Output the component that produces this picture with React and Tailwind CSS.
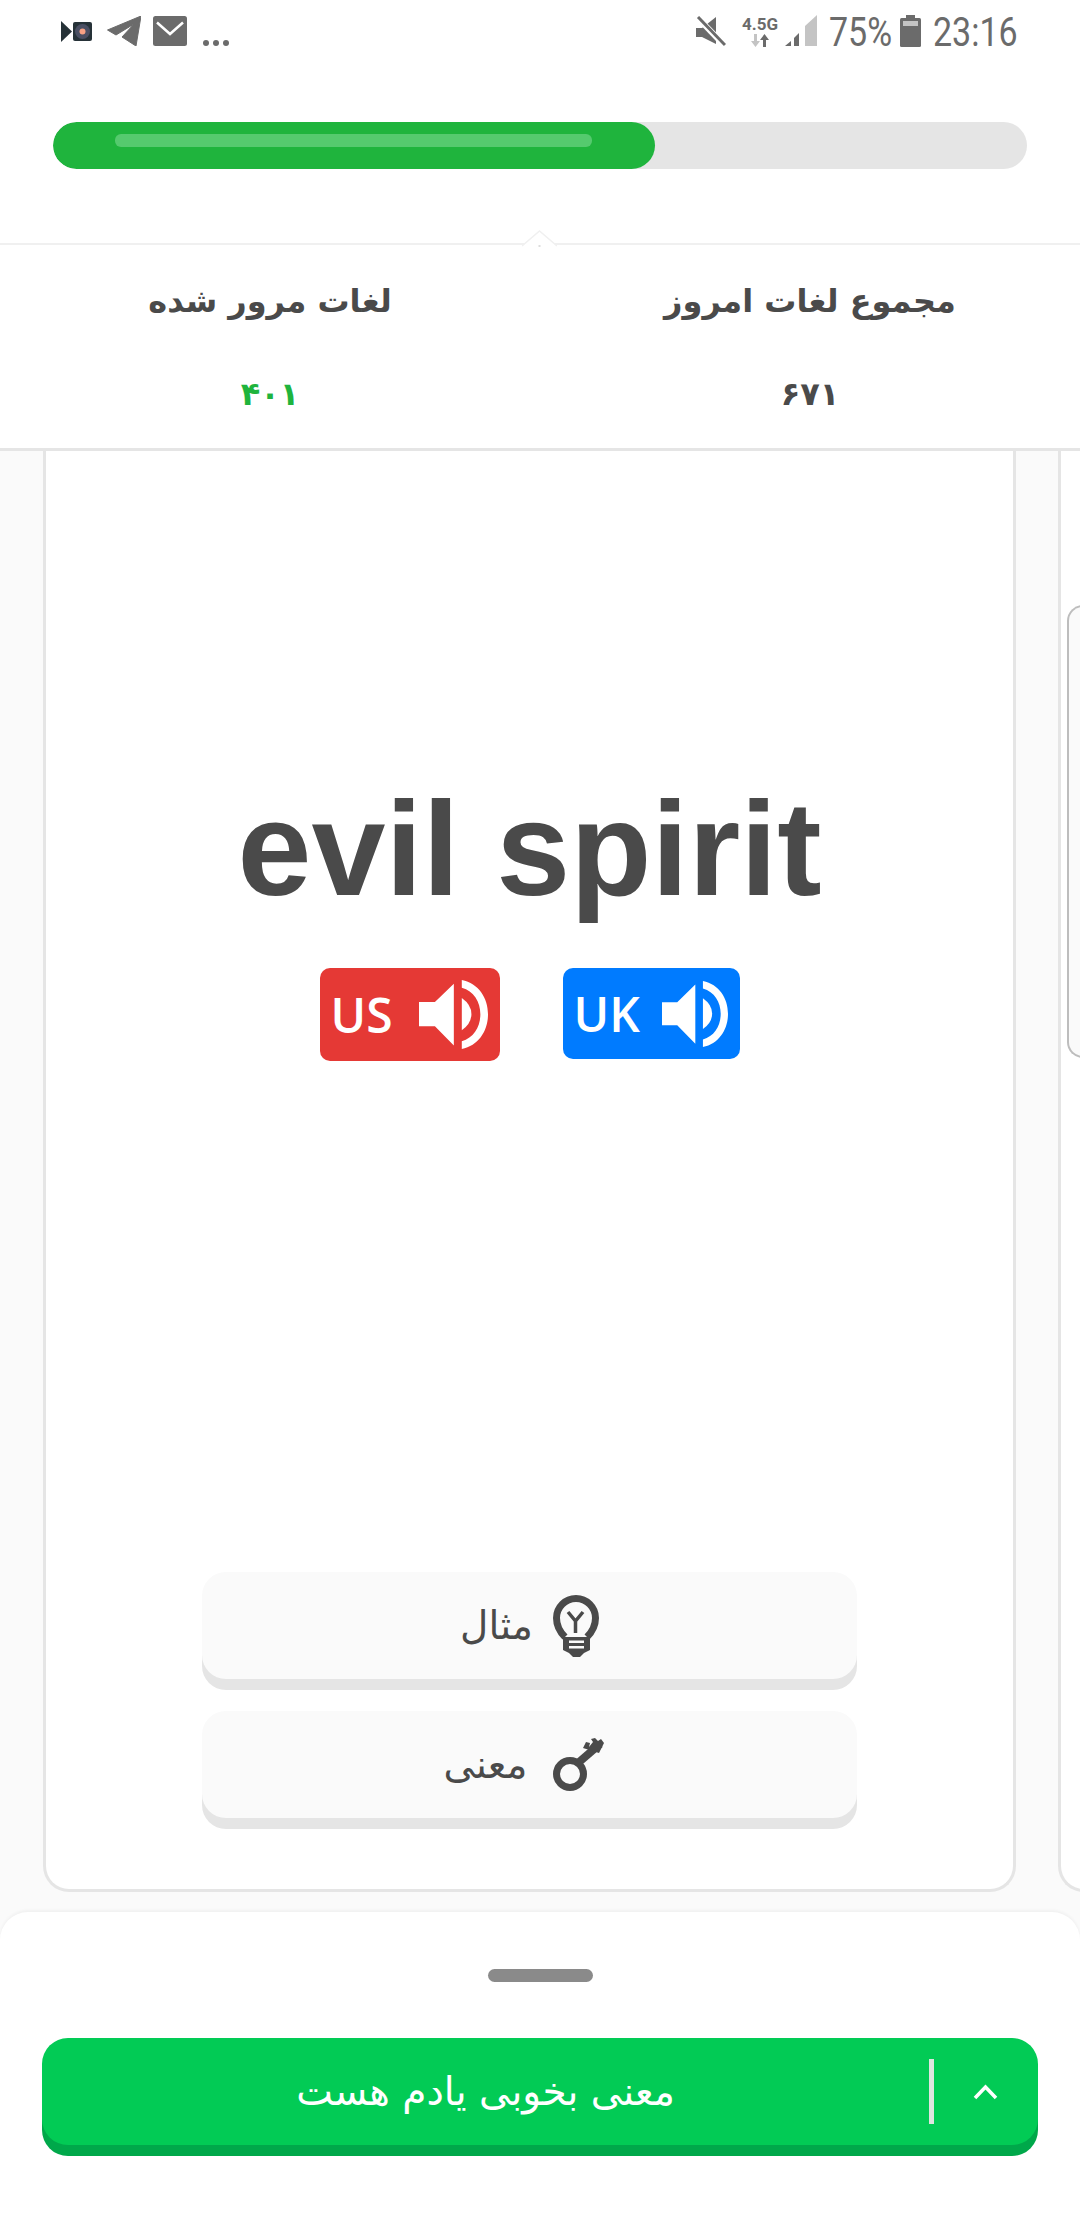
import React from 'react';

const arabic = "font-['DejaVu_Sans',sans-serif]";

function RecordIcon() {
  return (
    <svg width="31" height="21" viewBox="0 0 31 21">
      <path d="M0 0 L11 10.5 L0 21 Z" fill="#263238" />
      <rect x="12" y="1" width="19" height="19" rx="2" fill="#263238" />
      <circle cx="21.5" cy="10.5" r="7.5" fill="#4a4f63" />
      <circle cx="21.5" cy="10.5" r="3" fill="#f7a184" />
    </svg>
  );
}

function TelegramIcon() {
  return (
    <svg width="34" height="30" viewBox="0 0 34 30">
      <path d="M0.5 14 L34 0 L29 30 L15 21 L27 8 L9 19 Z" fill="#6b6b6b" strokeLinejoin="round" stroke="#6b6b6b" strokeWidth="1" />
    </svg>
  );
}

function MailIcon() {
  return (
    <svg width="34" height="30" viewBox="0 0 34 30">
      <rect width="34" height="30" rx="2.5" fill="#6b6b6b" />
      <path d="M4 6.5 L17 18 L30 6.5" fill="none" stroke="white" strokeWidth="2.5" />
    </svg>
  );
}

function MuteIcon() {
  return (
    <svg width="30" height="31" viewBox="0 0 30 31">
      <path d="M0 12 H6 L20 1 V28 L6 21 H0 Z" fill="#6b6b6b" />
      <path d="M2 2 L28 29" stroke="white" strokeWidth="6" />
      <path d="M2 1 L29 29" stroke="#6b6b6b" strokeWidth="3" />
    </svg>
  );
}

function DataArrows() {
  return (
    <svg width="18" height="13" viewBox="0 0 18 13">
      <path d="M3 0 H6 V7 H9 L4.5 13 L0 7 H3 Z" fill="#c4c4c4" />
      <path d="M12 13 H15 V6 H18 L13.5 0 L9 6 H12 Z" fill="#6b6b6b" />
    </svg>
  );
}

function SignalIcon() {
  return (
    <svg width="32" height="32" viewBox="0 0 32 32">
      <path d="M0 31 L6 26 V31 Z" fill="#6b6b6b" />
      <path d="M9 23 L14 18 V31 H9 Z" fill="#6b6b6b" />
      <path d="M20 11 L32 0 V31 H20 Z" fill="#c4c4c4" />
    </svg>
  );
}

function BatteryIcon() {
  return (
    <svg width="21" height="32" viewBox="0 0 21 32">
      <rect x="6" y="0" width="9" height="4" fill="#6b6b6b" />
      <rect x="0" y="3" width="21" height="29" rx="1.5" fill="#6b6b6b" />
      <rect x="3" y="6" width="15" height="5" fill="#c4c4c4" />
    </svg>
  );
}

function SpeakerIcon({ size }) {
  return (
    <svg width={size} height={size} viewBox="355 92 208 203" preserveAspectRatio="none" fill="white">
      <path d="M355 157 H403 L460 103 V285 L403 228 H355 Z" />
      <path d="M484 145 Q513 165 513 192 Q513 220 484 240 Z" />
      <path d="M484 92 C535 102 563 145 563 193 C563 241 535 285 484 295 V272 C520 262 540 230 540 193 C540 156 520 125 484 115 Z" />
    </svg>
  );
}

function BulbIcon() {
  return (
    <svg width="46" height="62" viewBox="0 0 46 62">
      <path d="M12 42 C6 36 3.5 30 3.5 23 A19.5 19.5 0 0 1 42.5 23 C42.5 30 40 36 34 42" fill="none" stroke="#4a4a4a" strokeWidth="7" />
      <path d="M15 17 L22.5 26 L30 17 M22.5 26 V38" fill="none" stroke="#4a4a4a" strokeWidth="3.5" />
      <path d="M10 42 H37 V55 L31 58 L27 62 H20 L16 58 L10 55 Z" fill="#4a4a4a" />
      <rect x="16" y="45.5" width="15" height="2.5" fill="#fafafa" />
      <rect x="16" y="51" width="15" height="2.5" fill="#fafafa" />
    </svg>
  );
}

function KeyIcon() {
  return (
    <svg width="51" height="53" viewBox="0 0 51 53">
      <circle cx="17" cy="36" r="13.5" fill="none" stroke="#4a4a4a" strokeWidth="7" />
      <path d="M25 25 L47 6" stroke="#4a4a4a" strokeWidth="8" />
      <path d="M30 10 L33 4 L37 5 L36 9 L40 4 L38 1 L42 0 L45 3 L48 1 L51 5 L46 15 Z" fill="#4a4a4a" />
    </svg>
  );
}

function Stat({ label, value, color }) {
  return (
    <div className="flex flex-col items-center">
      <div className={`${arabic} text-[32px] leading-[40px] font-bold text-[#4a4a4a]`}>{label}</div>
      <div className={`${arabic} mt-[55px] text-[32px] leading-[36px] font-bold ${color}`}>{value}</div>
    </div>
  );
}

function PronButton({ label, color, height, iconSize }) {
  return (
    <div className={`flex items-center justify-between rounded-[10px] pr-[12px] pl-[11px] ${color} ${height}`}>
      <span className="font-['Open_Sans',sans-serif] text-[48px] leading-none font-semibold text-white">{label}</span>
      <SpeakerIcon size={iconSize} />
    </div>
  );
}

function HintButton({ label, children, className }) {
  return (
    <div dir="rtl" className={`flex h-[107px] w-[655px] items-center justify-center rounded-[24px] bg-[#fafafa] shadow-[0_11px_0_#e5e5e5] ${className}`}>
      {children}
      <span className={`${arabic} text-[39px] leading-none text-[#4a4a4a]`}>{label}</span>
    </div>
  );
}

export default function App() {
  return (
    <div className="flex h-[2220px] w-[1080px] flex-col overflow-hidden bg-[#fafafa]">
      {/* Status bar */}
      <div className="flex h-[62px] shrink-0 items-center justify-between bg-white pr-[62px] pl-[61px]">
        <div className="flex items-center gap-[12px]">
          <div className="mr-[3px]"><RecordIcon /></div>
          <TelegramIcon />
          <MailIcon />
          <div className="mt-[24px] ml-[4px] flex gap-[4px]">
            <span className="h-[6px] w-[6px] rounded-full bg-[#6b6b6b]" />
            <span className="h-[6px] w-[6px] rounded-full bg-[#6b6b6b]" />
            <span className="h-[6px] w-[6px] rounded-full bg-[#6b6b6b]" />
          </div>
        </div>
        <div className="flex items-center">
          <MuteIcon />
          <div className="ml-[16px] flex w-[36px] flex-col items-center gap-[2px]">
            <span className="font-['Roboto',sans-serif] text-[17px] leading-[16px] font-bold text-[#6b6b6b]">4.5G</span>
            <DataArrows />
          </div>
          <div className="ml-[7px]"><SignalIcon /></div>
          <div className="mt-[3px] ml-[12px] w-[71px] origin-left scale-x-[0.85] font-['Roboto',sans-serif] text-[40px] leading-none whitespace-nowrap text-[#6b6b6b]">75%</div>
          <BatteryIcon />
          <div className="mt-[3px] ml-[12px] w-[85px] origin-left scale-x-[0.85] font-['Roboto',sans-serif] text-[40px] leading-none whitespace-nowrap text-[#6b6b6b]">23:16</div>
        </div>
      </div>

      {/* Progress */}
      <div className="h-[181px] shrink-0 bg-white px-[53px] pt-[60px]">
        <div className="h-[47px] w-[974px] overflow-hidden rounded-full bg-[#e5e5e5]">
          <div className="flex h-full w-[602px] rounded-full bg-[#1fb43d] pt-[12px] pl-[62px]">
            <div className="h-[13px] w-[477px] rounded-[6px] bg-[#55ca6e]" />
          </div>
        </div>
      </div>

      {/* Counters */}
      <div className="relative h-[208px] shrink-0 border-t-[2px] border-b-[3px] border-t-[#f0f0f0] border-b-[#e5e5e5] bg-white">
        <svg className="absolute top-[-15px] left-[522px]" width="35" height="17" viewBox="0 0 35 17">
          <path d="M0 16 L17.5 1 L35 16" fill="white" stroke="#f0f0f0" strokeWidth="1.5" />
          <rect x="16.5" y="15" width="2" height="2" fill="#dddddd" />
        </svg>
        <div dir="rtl" className="grid grid-cols-2 pt-[36px]">
          <Stat label="مجموع لغات امروز" value="۶۷۱" color="text-[#4a4a4a]" />
          <Stat label="لغات مرور شده" value="۴۰۱" color="text-[#1fb43d]" />
        </div>
      </div>

      {/* Cards */}
      <div className="flex min-h-0 flex-1 gap-[42px] pb-[20px] pl-[43px]">
        <div className="flex w-[973px] shrink-0 flex-col items-center rounded-b-[26px] border-x-[3px] border-b-[3px] border-[#e5e5e5] bg-white pb-[71px]">
          <div className="mt-[318px] font-['Liberation_Sans',sans-serif] text-[133px] leading-[160px] font-bold text-[#4a4a4a]">evil spirit</div>
          <div className="mt-[39px] flex items-start gap-[63px]">
            <div className="w-[180px]"><PronButton label="US" color="bg-[#e53935]" height="h-[93px]" iconSize={69} /></div>
            <div className="w-[177px]"><PronButton label="UK" color="bg-[#007bff]" height="h-[91px]" iconSize={66} /></div>
          </div>
          <div className="mt-auto flex flex-col gap-[32px]">
            <HintButton label="مثال" className="gap-[20px]"><BulbIcon /></HintButton>
            <HintButton label="معنی" className="gap-[25px] pr-[12px]"><KeyIcon /></HintButton>
          </div>
        </div>
        <div className="w-[400px] shrink-0 rounded-bl-[26px] border-b-[3px] border-l-[3px] border-[#e5e5e5] bg-white pl-[6px]">
          <div className="mt-[154px] h-[453px] w-[300px] rounded-l-[16px] border-y-[2px] border-l-[2px] border-[#bdbdbd] bg-[#fafafa]" />
        </div>
      </div>

      {/* Bottom sheet */}
      <div className="flex h-[308px] shrink-0 flex-col items-center rounded-t-[28px] bg-white pt-[57px] shadow-[0_-2px_3px_rgba(0,0,0,0.04)]">
        <div className="h-[13px] w-[105px] rounded-full bg-[#8a8a8a]" />
        <div className="mt-[56px] flex h-[107px] w-[996px] items-center rounded-[26px] bg-[#02cb55] shadow-[0_11px_0_#00a84a]">
          <div className={`${arabic} w-[887px] text-center text-[39px] leading-none text-white`} dir="rtl">معنی بخوبی یادم هست</div>
          <div className="h-[65px] w-[5px] bg-[#dfe5e0]" />
          <svg className="ml-[39px]" width="25" height="16" viewBox="0 0 25 16">
            <path d="M2 14 L12.5 3 L23 14" fill="none" stroke="white" strokeWidth="3.5" />
          </svg>
        </div>
      </div>
    </div>
  );
}
